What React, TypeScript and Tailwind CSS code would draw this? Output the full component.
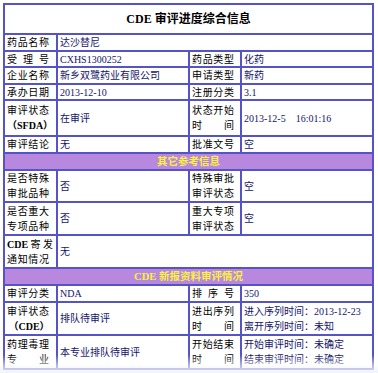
import React from 'react';

const cell = 'border-2 border-[#5454c8] px-[2px] align-middle';
const label = `${cell} text-black`;
const value = `${cell} text-[#14146a]`;

// old-style "distributed" label: characters spread over a fixed width
const Spread: React.FC<{ text: string }> = ({ text }) => (
  <span className="flex w-[42px] justify-between">
    {text.split('').map((c, i) => (
      <span key={i}>{c}</span>
    ))}
  </span>
);

const Two: React.FC<{ a: React.ReactNode; b: React.ReactNode }> = ({ a, b }) => (
  <div className="flex flex-col leading-[15px]">
    <div>{a}</div>
    <div>{b}</div>
  </div>
);

const Header: React.FC<{ children: React.ReactNode }> = ({ children }) => (
  <tr className="h-[17px]">
    <td colSpan={4} className={`${cell} bg-[#b888de] text-center text-[#fbf03c] text-[10.5px] font-bold`}>
      {children}
    </td>
  </tr>
);

export default function App() {
  return (
    <div
      className="relative w-[378px] h-[373px] overflow-hidden bg-white pl-[3px] pt-[3px]"
      style={{ fontFamily: '"Liberation Serif", "Noto Sans CJK SC", serif' }}
    >
      <table className="table-fixed border-collapse w-[369px] text-[10px] leading-[13px]">
        <colgroup>
          <col className="w-[53px]" />
          <col className="w-[132px]" />
          <col className="w-[52px]" />
          <col className="w-[132px]" />
        </colgroup>
        <tbody>
          <tr className="h-[30px]">
            <td colSpan={4} className={`${cell} text-center font-bold text-[12px] text-black`}>
              CDE 审评进度综合信息
            </td>
          </tr>
          <tr className="h-[17px]">
            <td className={label}><Spread text="药品名称" /></td>
            <td colSpan={3} className={value}>达沙替尼</td>
          </tr>
          <tr className="h-[16px]">
            <td className={label}><Spread text="受理号" /></td>
            <td className={value}>CXHS1300252</td>
            <td className={label}><Spread text="药品类型" /></td>
            <td className={value}>化药</td>
          </tr>
          <tr className="h-[17px]">
            <td className={label}><Spread text="企业名称" /></td>
            <td className={value}>新乡双鹭药业有限公司</td>
            <td className={label}><Spread text="申请类型" /></td>
            <td className={value}>新药</td>
          </tr>
          <tr className="h-[16px]">
            <td className={label}><Spread text="承办日期" /></td>
            <td className={value}>2013-12-10</td>
            <td className={label}><Spread text="注册分类" /></td>
            <td className={value}>3.1</td>
          </tr>
          <tr className="h-[36px]">
            <td className={label}>
              <Two a={<Spread text="审评状态" />} b={<span className="block w-[44px] text-center font-bold">（SFDA）</span>} />
            </td>
            <td className={value}>在审评</td>
            <td className={label}>
              <Two a={<Spread text="状态开始" />} b={<Spread text="时间" />} />
            </td>
            <td className={value}>2013-12-5&nbsp;&nbsp;&nbsp;&nbsp;16:01:16</td>
          </tr>
          <tr className="h-[17px]">
            <td className={label}><Spread text="审评结论" /></td>
            <td className={value}>无</td>
            <td className={label}><Spread text="批准文号" /></td>
            <td className={value}>空</td>
          </tr>
          <Header>其它参考信息</Header>
          <tr className="h-[32px]">
            <td className={label}>
              <Two a={<Spread text="是否特殊" />} b={<Spread text="审批品种" />} />
            </td>
            <td className={value}>否</td>
            <td className={label}>
              <Two a={<Spread text="特殊审批" />} b={<Spread text="审评状态" />} />
            </td>
            <td className={value}>空</td>
          </tr>
          <tr className="h-[33px]">
            <td className={label}>
              <Two a={<Spread text="是否重大" />} b={<Spread text="专项品种" />} />
            </td>
            <td className={value}>否</td>
            <td className={label}>
              <Two a={<Spread text="重大专项" />} b={<Spread text="审评状态" />} />
            </td>
            <td className={value}>空</td>
          </tr>
          <tr className="h-[33px]">
            <td className={label}>
              <Two
                a={
                  <span className="flex w-[46px] justify-between">
                    <span className="font-bold">CDE</span>
                    <span>寄</span>
                    <span>发</span>
                  </span>
                }
                b={<Spread text="通知情况" />}
              />
            </td>
            <td colSpan={3} className={value}>无</td>
          </tr>
          <Header>CDE 新报资料审评情况</Header>
          <tr className="h-[17px]">
            <td className={label}><Spread text="审评分类" /></td>
            <td className={value}>NDA</td>
            <td className={label}><Spread text="排序号" /></td>
            <td className={value}>350</td>
          </tr>
          <tr className="h-[33px]">
            <td className={label}>
              <Two a={<Spread text="审评状态" />} b={<span className="block w-[44px] text-center font-bold">（CDE）</span>} />
            </td>
            <td className={value}>排队待审评</td>
            <td className={label}>
              <Two a={<Spread text="进出序列" />} b={<Spread text="时间" />} />
            </td>
            <td className={value}>
              <Two a="进入序列时间：2013-12-23" b="离开序列时间：未知" />
            </td>
          </tr>
          <tr className="h-[34px]">
            <td className={label}>
              <Two a={<Spread text="药理毒理" />} b={<Spread text="专业" />} />
            </td>
            <td className={value}>本专业排队待审评</td>
            <td className={label}>
              <Two a={<Spread text="开始结束" />} b={<Spread text="时间" />} />
            </td>
            <td className={value}>
              <Two a="开始审评时间：未确定" b="结束审评时间：未确定" />
            </td>
          </tr>
        </tbody>
      </table>
      <div className="pointer-events-none absolute left-0 right-0 bottom-0 h-[18px] bg-gradient-to-b from-white/0 via-white/50 to-[#eef2fb]/90" />
    </div>
  );
}
